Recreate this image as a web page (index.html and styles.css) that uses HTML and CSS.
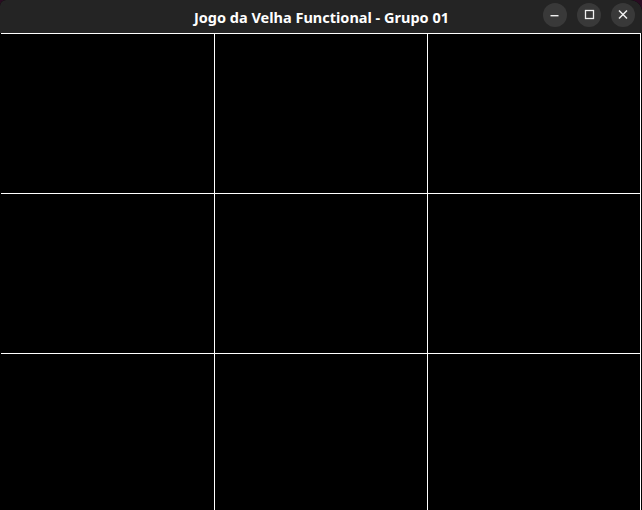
FILE: index.html
```html
<!DOCTYPE html>
<html lang="pt">
<head>
<meta charset="utf-8">
<title>Jogo da Velha Functional - Grupo 01</title>
<link rel="stylesheet" href="styles.css">
</head>
<body>
<div class="window">
  <header class="titlebar">
    <div class="title">Jogo da Velha Functional - Grupo 01</div>
    <div class="controls">
      <button class="ctl" aria-label="Minimizar">
        <svg width="24" height="24" viewBox="0 0 24 24"><rect x="7.5" y="12" width="8" height="1.4" fill="#f0f0f0"/></svg>
      </button>
      <button class="ctl" aria-label="Maximizar">
        <svg width="24" height="24" viewBox="0 0 24 24"><rect x="8.5" y="7.5" width="8" height="8" fill="none" stroke="#f0f0f0" stroke-width="1.3"/></svg>
      </button>
      <button class="ctl" aria-label="Fechar">
        <svg width="24" height="24" viewBox="0 0 24 24"><path d="M8 7.5 L16 15.5 M16 7.5 L8 15.5" stroke="#f0f0f0" stroke-width="1.5" fill="none"/></svg>
      </button>
    </div>
  </header>
  <main class="board">
    <div class="cell"></div>
    <div class="cell"></div>
    <div class="cell"></div>
    <div class="cell"></div>
    <div class="cell"></div>
    <div class="cell"></div>
    <div class="cell"></div>
    <div class="cell"></div>
    <div class="cell"></div>
  </main>
</div>
</body>
</html>
```

FILE: styles.css
```css
html, body {
  margin: 0;
  padding: 0;
  background: #2a0c22;
  height: 510px;
  overflow: hidden;
}

.window {
  width: 642px;
  height: 510px;
  display: flex;
  flex-direction: column;
  background: #000;
  border-radius: 6px 12px 0 0;
  overflow: hidden;
}

.titlebar {
  height: 33px;
  flex: none;
  background: #242424;
  display: flex;
  align-items: center;
  justify-content: center;
  position: relative;
}

.title {
  font-family: "Noto Sans", "Open Sans", sans-serif;
  font-weight: 700;
  font-size: 14.5px;
  color: #ffffff;
  margin-left: 1px;
  padding-top: 0;
}

.controls {
  position: absolute;
  right: 7px;
  top: 3px;
  display: flex;
  gap: 10px;
}

.ctl {
  width: 24px;
  height: 24px;
  border-radius: 50%;
  border: none;
  padding: 0;
  background: #393939;
  display: flex;
  align-items: center;
  justify-content: center;
}

.ctl svg {
  display: block;
}

.board {
  flex: 1;
  margin-left: 1px;
  width: 640px;
  box-sizing: border-box;
  padding: 1px 1px 0 0;
  background: #ffffff;
  display: grid;
  grid-template-columns: 213px 212px 212px;
  grid-template-rows: 159px 159px 1fr;
  gap: 1px;
}

.cell {
  background: #000000;
}
```
